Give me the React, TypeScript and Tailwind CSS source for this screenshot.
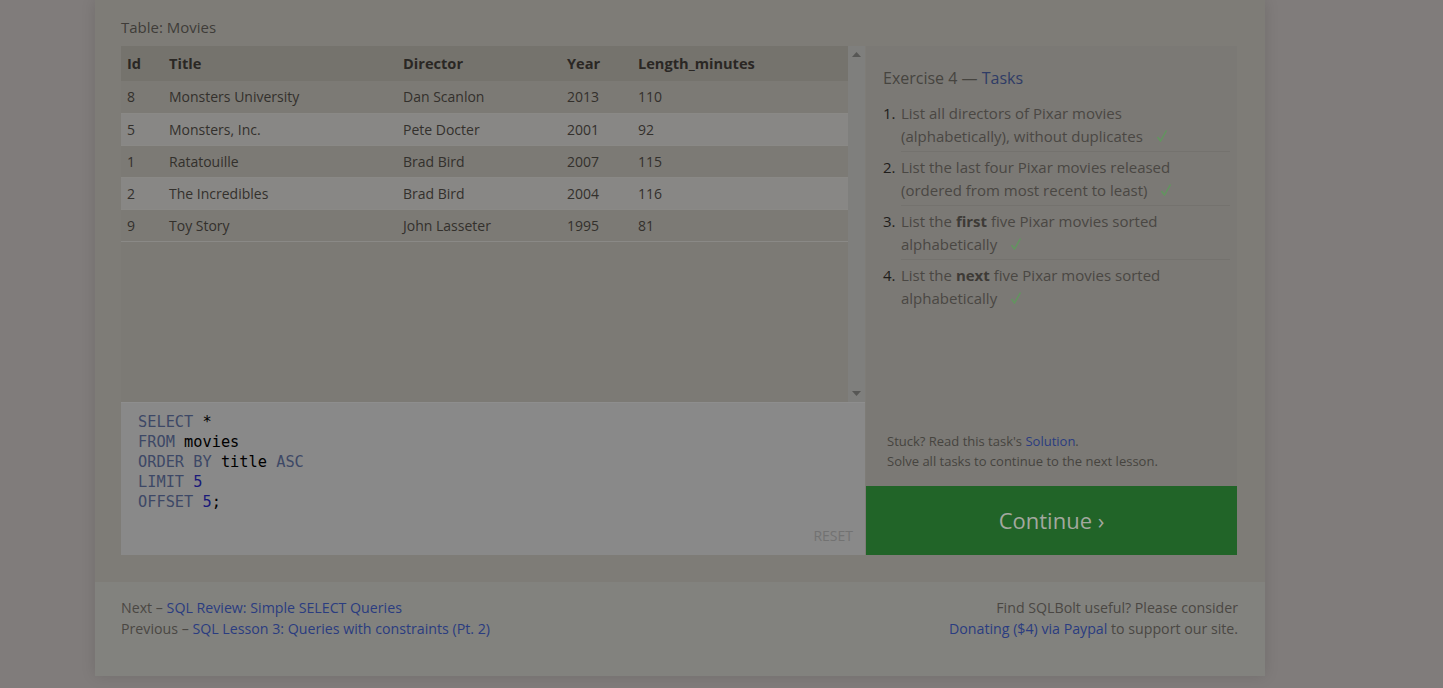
import React from 'react';

type Movie = { id: number; title: string; director: string; year: number; length: number };

const movies: Movie[] = [
  { id: 8, title: 'Monsters University', director: 'Dan Scanlon', year: 2013, length: 110 },
  { id: 5, title: 'Monsters, Inc.', director: 'Pete Docter', year: 2001, length: 92 },
  { id: 1, title: 'Ratatouille', director: 'Brad Bird', year: 2007, length: 115 },
  { id: 2, title: 'The Incredibles', director: 'Brad Bird', year: 2004, length: 116 },
  { id: 9, title: 'Toy Story', director: 'John Lasseter', year: 1995, length: 81 },
];

const Check = () => (
  <svg className="inline-block ml-[13px] align-baseline" width="12" height="12" viewBox="0 0 12 12">
    <path d="M1.5 7 L4.5 11 L10.5 0.5" fill="none" stroke="#62955f" strokeWidth="1.5" />
  </svg>
);

const App: React.FC = () => {
  return (
    <div className="h-[688px] overflow-hidden bg-[#807c7b] font-['Open_Sans',sans-serif]">
      <div className="ml-[95px] w-[1170px] shadow-[0_0_14px_rgba(0,0,0,0.12)]">
        {/* Exercise */}
        <div className="bg-[#7e7c77] pl-[26px] pr-[28px] pt-[16px] pb-[27px]">
          <div className="text-[15px] leading-[22px] text-[#3f3c39] mb-[8px]">Table: Movies</div>
          <div className="flex">
            <div className="w-[744px] flex flex-col">
              <div className="flex h-[356px] bg-[#7c7a75]">
                <div className="flex-1">
                  <table className="w-full text-[14px] text-[#33302c] border-collapse">
                    <thead>
                      <tr className="h-[35px] bg-[#75736d] text-left text-[#2a2724] text-[14.6px]">
                        <th className="pl-[6px] pt-[1px] w-[48px] font-bold">Id</th>
                        <th className="pt-[1px] w-[234px] font-bold">Title</th>
                        <th className="pt-[1px] w-[164px] font-bold">Director</th>
                        <th className="pt-[1px] w-[71px] font-bold">Year</th>
                        <th className="pt-[1px] font-bold">Length_minutes</th>
                      </tr>
                    </thead>
                    <tbody>
                      {movies.map((m, i) => (
                        <tr key={m.id} className={`h-[32px] border-b border-[#8a8986] ${i % 2 === 1 ? 'bg-[#888785]' : 'bg-[#7c7a75]'}`}>
                          <td className="pl-[6px]">{m.id}</td>
                          <td>{m.title}</td>
                          <td>{m.director}</td>
                          <td>{m.year}</td>
                          <td>{m.length}</td>
                        </tr>
                      ))}
                    </tbody>
                  </table>
                </div>
                <div className="w-[17px] bg-[#7f7f7d] flex flex-col items-center justify-between py-[6px]">
                  <svg width="9" height="5" viewBox="0 0 9 5"><polygon points="4.5,0 9,5 0,5" fill="#575755" /></svg>
                  <svg width="9" height="5" viewBox="0 0 9 5"><polygon points="0,0 9,0 4.5,5" fill="#575755" /></svg>
                </div>
              </div>
              <div className="relative h-[153px] bg-[#898989] border-t border-[#8e8e8e] pl-[17px] pt-[9px] font-['DejaVu_Sans_Mono',monospace] text-[15.3px] leading-[20px]">
                <div><span className="text-[#3d4866]">SELECT</span> <span className="text-black">*</span></div>
                <div><span className="text-[#3d4866]">FROM</span> <span className="text-black">movies</span></div>
                <div><span className="text-[#3d4866]">ORDER BY</span> <span className="text-black">title</span> <span className="text-[#3d4866]">ASC</span></div>
                <div><span className="text-[#3d4866]">LIMIT</span> <span className="text-[#1a1a7a]">5</span></div>
                <div><span className="text-[#3d4866]">OFFSET</span> <span className="text-[#1a1a7a]">5</span><span className="text-black">;</span></div>
                <span className="absolute right-[12px] bottom-[9px] font-['Open_Sans',sans-serif] text-[14px] text-[#727272]">RESET</span>
              </div>
            </div>
            <div className="w-[371px] ml-[1px] flex flex-col">
              <div className="flex-1 bg-[#7b7975] pl-[17px] pr-[7px] pt-[20px] flex flex-col">
                <div className="text-[16px] leading-[24px] text-[#46443f]">
                  Exercise 4 — <span className="text-[#2f3c66]">Tasks</span>
                </div>
                <ol className="mt-[12px] text-[15px] leading-[22.5px] text-[#4a4743]">
                  {[
                    <>List all directors of Pixar movies (alphabetically), without duplicates</>,
                    <>List the last four Pixar movies released (ordered from most recent to least)</>,
                    <>List the <b className="text-[#3d3a36]">first</b> five Pixar movies sorted alphabetically</>,
                    <>List the <b className="text-[#3d3a36]">next</b> five Pixar movies sorted alphabetically</>,
                  ].map((t, i) => (
                    <li key={i} className="flex">
                      <span className="w-[18px] text-[#1f1d1b]">{i + 1}.</span>
                      <div className={`flex-1 pb-[4px] mb-[4px] ${i < 3 ? 'border-b border-[#74726e]' : ''}`}>
                        {t}
                        <Check />
                      </div>
                    </li>
                  ))}
                </ol>
                <div className="mt-auto pb-[15px] pl-[4px] text-[13px] leading-[20px] text-[#46443f]">
                  <div>Stuck? Read this task's <span className="text-[#2a3c80]">Solution</span>.</div>
                  <div>Solve all tasks to continue to the next lesson.</div>
                </div>
              </div>
              <div className="h-[69px] bg-[#216428] flex items-center justify-center text-[22px] text-[#a3a89f]">
                Continue ›
              </div>
            </div>
          </div>
        </div>
        {/* Footer */}
        <div className="h-[94px] bg-[#82827e] pl-[26px] pr-[27px] pt-[15px] flex justify-between text-[14.2px] leading-[21px] text-[#4a4743]">
          <div>
            <div>Next – <span className="text-[#2a3c80]">SQL Review: Simple SELECT Queries</span></div>
            <div>Previous – <span className="text-[#2a3c80]">SQL Lesson 3: Queries with constraints (Pt. 2)</span></div>
          </div>
          <div className="text-right">
            <div>Find SQLBolt useful? Please consider</div>
            <div><span className="text-[#2a3c80]">Donating ($4) via Paypal</span> to support our site.</div>
          </div>
        </div>
      </div>
    </div>
  );
};

export default App;
